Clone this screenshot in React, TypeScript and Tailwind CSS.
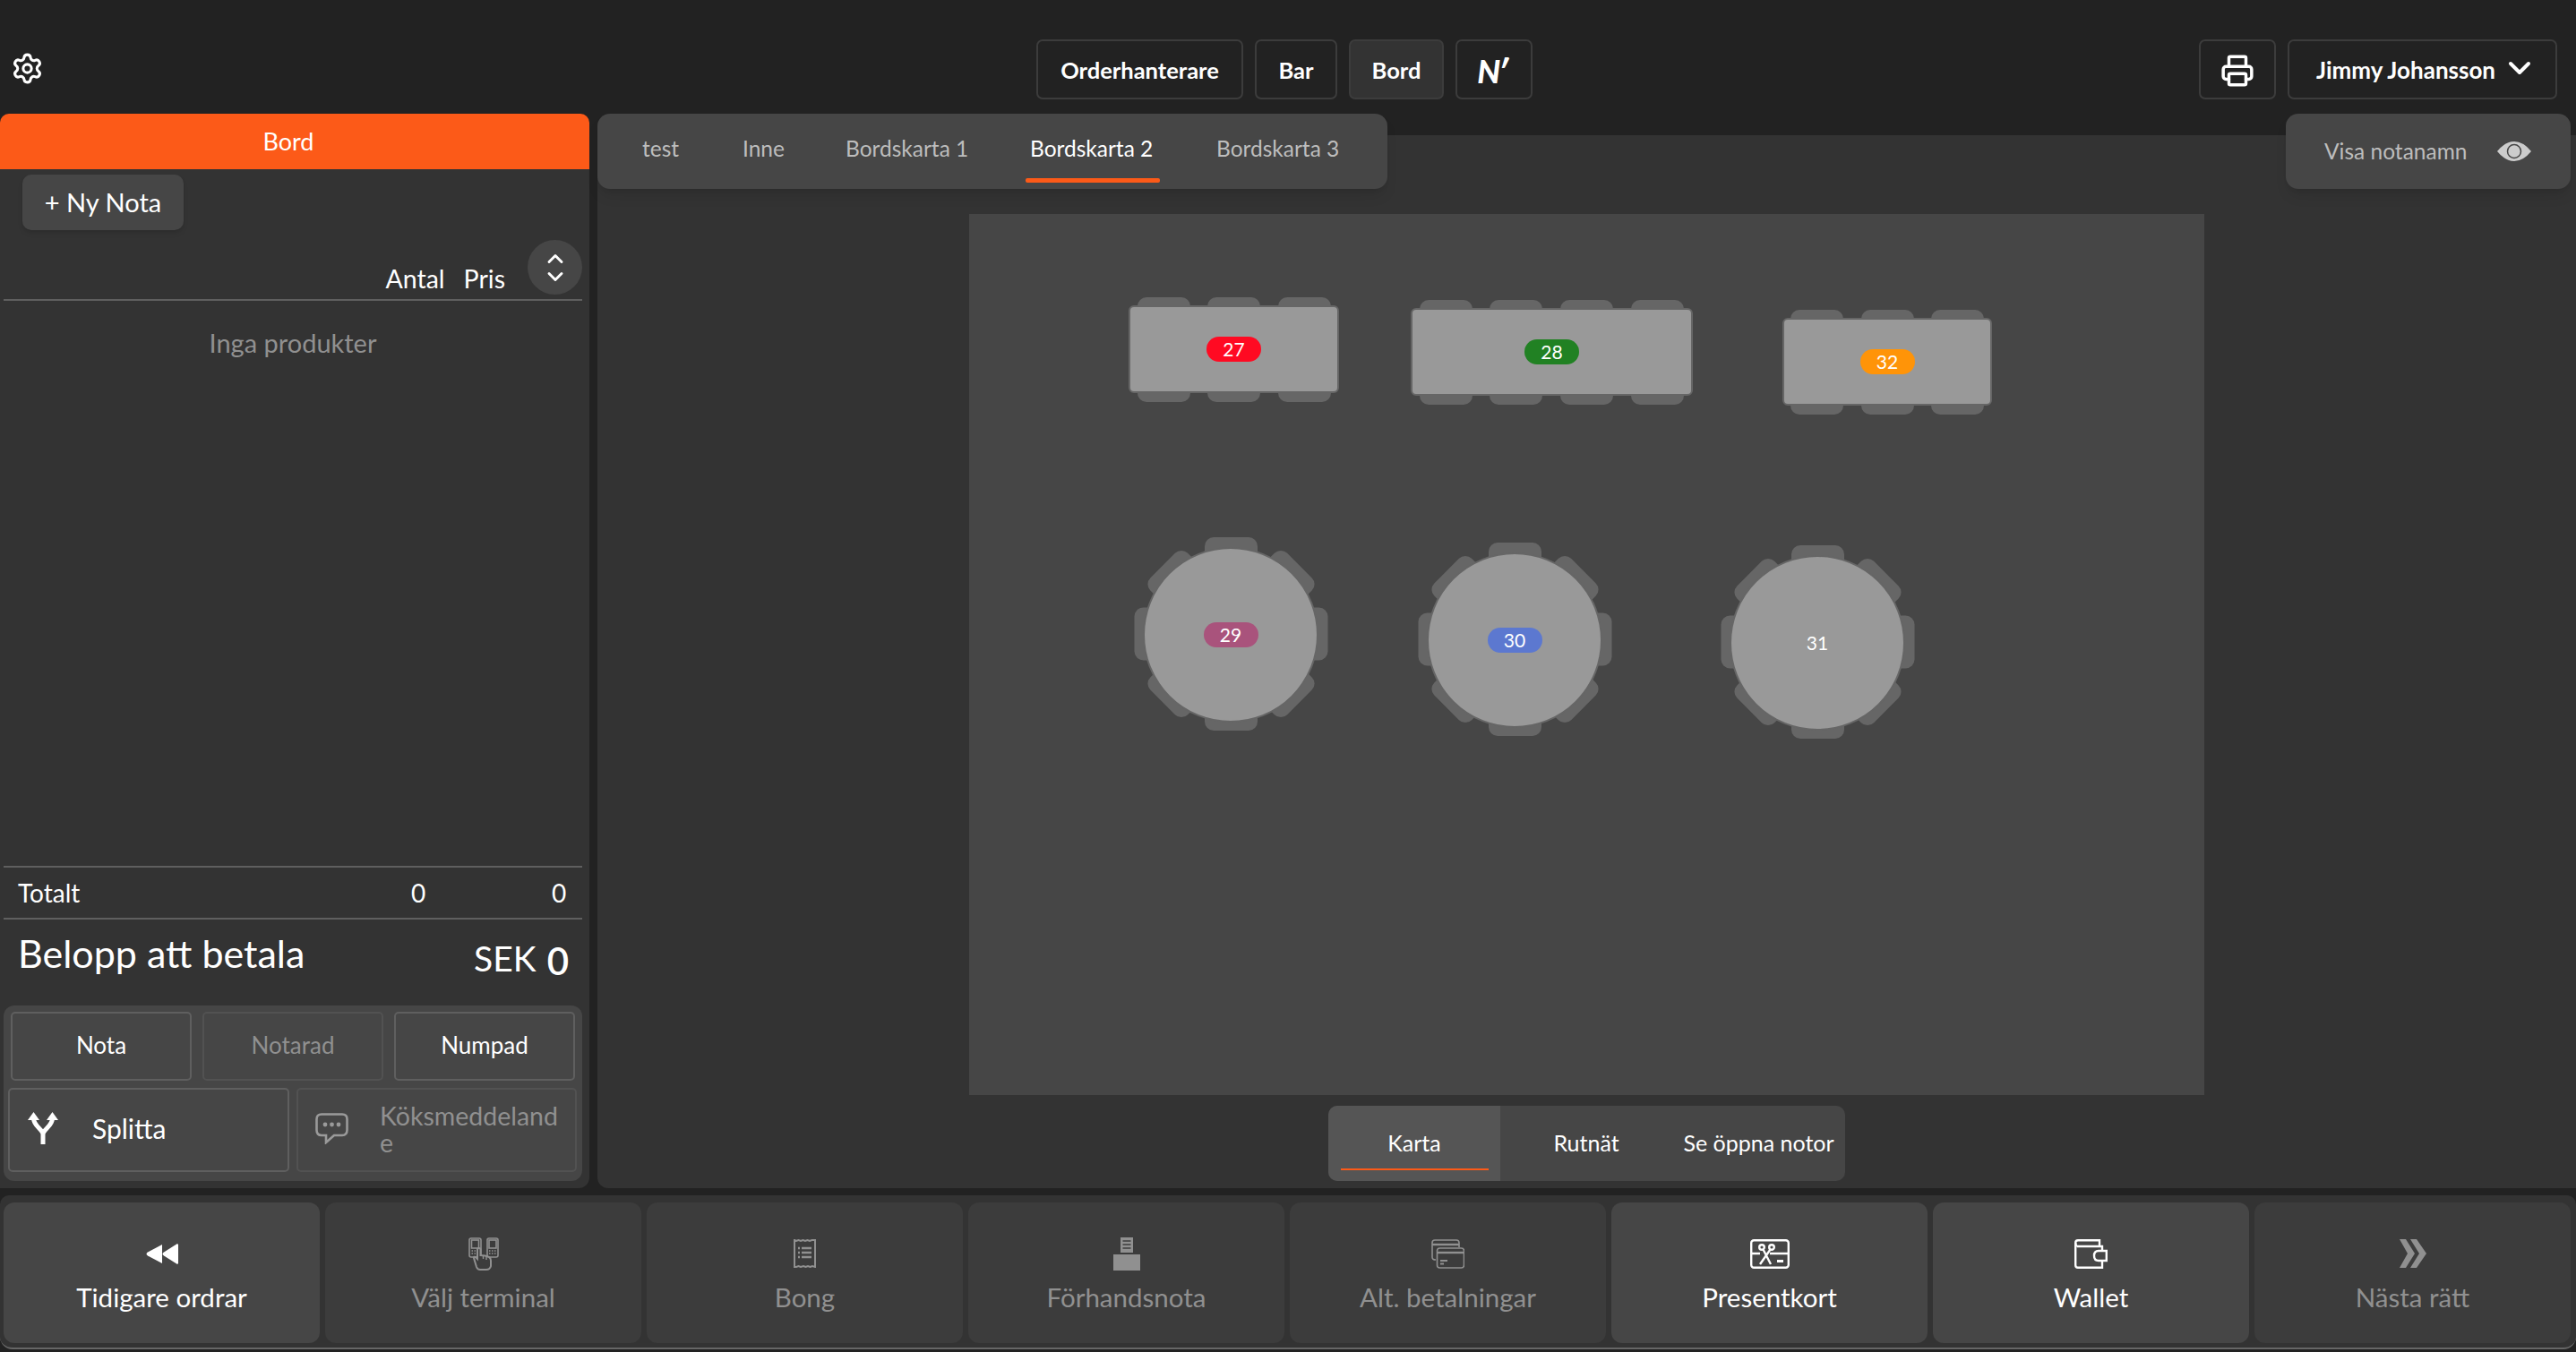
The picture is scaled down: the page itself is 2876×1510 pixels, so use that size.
import { ChevronDown, ChevronUp, Printer, Settings } from "lucide-react";

const font = { fontFamily: "Lato, 'Noto Sans', sans-serif" };

function Badge({ label, className }: { label: string; className: string }) {
    return (
        <div className={`w-[61px] h-[28px] rounded-[14px] flex items-center justify-center text-white text-[21px] ${className}`}>
            {label}
        </div>
    );
}

function RectTable({ x, y, w, label, badge, chairs }: { x: number; y: number; w: number; label: string; badge: string; chairs: number[] }) {
    return (
        <div className="absolute h-[118px]" style={{ left: x, top: y, width: w }}>
            {chairs.map((c) => (
                <div key={c} className="absolute top-0 h-[117px] w-[59px] bg-[#666666] rounded-[10px]" style={{ left: c }} />
            ))}
            <div className="absolute left-0 right-0 top-[9px] h-[98px] bg-[#999999] border-2 border-[#666666] rounded-[6px] flex items-center justify-center">
                <Badge label={label} className={badge} />
            </div>
        </div>
    );
}

function RoundTable({ x, y, label, badge }: { x: number; y: number; label: string; badge?: string }) {
    return (
        <div className="absolute w-[216px] h-[216px]" style={{ left: x, top: y }}>
            <div className="absolute left-[79px] top-0 w-[59px] h-[216px] bg-[#666666] rounded-[10px]" />
            <div className="absolute left-[79px] top-0 w-[59px] h-[216px] bg-[#666666] rounded-[10px] rotate-90" />
            <div className="absolute left-[79px] top-0 w-[59px] h-[216px] bg-[#666666] rounded-[10px] rotate-45" />
            <div className="absolute left-[79px] top-0 w-[59px] h-[216px] bg-[#666666] rounded-[10px] -rotate-45" />
            <div className="absolute left-[10px] top-[11px] w-[196px] h-[196px] bg-[#999999] border-2 border-[#666666] rounded-full flex items-center justify-center">
                {badge ? <Badge label={label} className={badge} /> : <span className="text-white text-[21px]">{label}</span>}
            </div>
        </div>
    );
}

function TopButton({ children, active, className }: { children: React.ReactNode; active?: boolean; className: string }) {
    return (
        <button className={`h-[67px] border-2 border-[#3c3c3c] rounded-[7px] flex items-center justify-center text-white font-bold pt-[2px] ${active ? "bg-[#333333]" : "bg-[#222222]"} ${className}`}>
            {children}
        </button>
    );
}

function Rewind() {
    return (
        <svg width="37" height="23" viewBox="0 0 37 23" fill="currentColor">
            <path d="M19 1 L19 22 L3 13.5 Q0 11.5 3 9.5 Z" />
            <path d="M36 0 L37 1 L37 22 L36 23 L21 13.5 Q18 11.5 21 9.5 Z" />
        </svg>
    );
}

function Terminals() {
    return (
        <svg width="34" height="37" viewBox="0 0 34 37" fill="none" stroke="currentColor" strokeWidth="1.6">
            <rect x="1" y="1" width="13" height="21" rx="2" />
            <rect x="3.5" y="3" width="8" height="9" />
            <path d="M3.5 15h8M3.5 18h8" strokeDasharray="1.5 1.5" />
            <rect x="21" y="1" width="12" height="21" rx="2" />
            <rect x="23" y="3" width="8" height="9" />
            <path d="M23 15h8M23 18h8" strokeDasharray="1.5 1.5" />
            <path fill="#3c3c3c" strokeWidth="2" d="M9 33 L6 23 Q6 21 8 22 L10 24 L10 13 Q12 11 13.5 13 L13.5 20 Q19 20 23 22 Q25 23 25 26 L25 32 Q24 36 20 36 L13 36 Q10 36 9 33 Z" />
            <path d="M16.5 20v4M20 21v4" strokeWidth="1.4" />
        </svg>
    );
}

function Receipt() {
    return (
        <svg width="25" height="32" viewBox="0 0 25 32" fill="none" stroke="currentColor" strokeWidth="2">
            <path d="M1 1 L3 2 L5.5 1 L8 2 L10.5 1 L13 2 L15.5 1 L18 2 L20.5 1 L24 1 L24 31 L21 30 L18.5 31 L16 30 L13.5 31 L11 30 L8 31 L5.5 30 L3 31 L1 31 Z" />
            <path d="M9 10h11M9 15h11M9 20h11" strokeWidth="2.4" />
            <path d="M5 10h2M5 15h2M5 20h2" strokeWidth="2.4" />
        </svg>
    );
}

function PreviewPrinter() {
    return (
        <svg width="30" height="37" viewBox="0 0 30 37" fill="currentColor">
            <path d="M8 0h14v17H8z M0 19h30v18H0z" />
            <path d="M10.500 4h9M10.500 8h9M10.500 12h9" stroke="#3c3c3c" strokeWidth="1.500" />
        </svg>
    );
}

function Cards() {
    return (
        <svg width="37" height="33" viewBox="0 0 37 33" fill="none" stroke="currentColor" strokeWidth="1.6">
            <path d="M5 23 Q1 23 1 20 L1 4 Q1 1 4 1 L28 1 Q31 1 31 4 L31 9" />
            <path d="M1 6h30" strokeWidth="2.4" />
            <rect x="6.5" y="10" width="30" height="22" rx="3" fill="#3c3c3c" />
            <path d="M6.5 15h30" strokeWidth="2.4" />
            <path d="M10 24h8M10 27.5h4" strokeWidth="2" />
        </svg>
    );
}

function GiftCard() {
    return (
        <svg width="44" height="33" viewBox="0 0 44 33" fill="none" stroke="currentColor" strokeWidth="2.4">
            <rect x="1.2" y="1.2" width="41.6" height="30.6" rx="3" />
            <path d="M1 16h10M22 16h21" />
            <circle cx="13" cy="9" r="2.8" />
            <circle cx="24" cy="9" r="2.8" />
            <path d="M14.5 11.5 L23 28 M22.5 11.5 L11 28" />
            <path d="M30 24.5h7" strokeWidth="3" />
        </svg>
    );
}

function Wallet() {
    return (
        <svg width="37" height="33" viewBox="0 0 37 33" fill="none" stroke="currentColor" strokeWidth="2.4">
            <path d="M31 13 L31 8 L3 8 M3 8 Q1.2 7 1.2 4 Q1.2 1.2 4 1.2 L28 1.2 L28 8" />
            <path d="M1.2 4 L1.2 29 Q1.2 31.8 4 31.8 L31 31.8 L31 24" />
            <path d="M35.8 13 L27 13 Q22 13 22 18.5 Q22 24 27 24 L35.8 24 Z" />
        </svg>
    );
}

function Next() {
    return (
        <svg width="30" height="32" viewBox="0 0 30 32" fill="currentColor">
            <path d="M0 0 L7 0 L17 16 L7 32 L0 32 L9 16 Z" />
            <path d="M12 0 L19 0 L30 16 L19 32 L12 32 L22 16 Z" />
        </svg>
    );
}

function BottomButton({ icon, label, on }: { icon: React.ReactNode; label: string; on?: boolean }) {
    return (
        <button className={`flex-1 h-[157px] rounded-[12px] flex flex-col items-center text-[29.5px] ${on ? "bg-[#464646] text-white" : "bg-[#3c3c3c] text-[#909090]"}`}>
            <div className="h-[38px] mt-[38px] flex items-center justify-center">{icon}</div>
            <span className="mt-[13px] leading-[34px]">{label}</span>
        </button>
    );
}

export default function App() {
    return (
        <div className="w-[2876px] h-[1510px] bg-[#222222] flex flex-col overflow-hidden" style={font}>
            {/* top bar */}
            <div className="h-[127px] relative flex items-start pt-[44px] shrink-0">
                <div className="w-[1157px] pl-[12px] pt-[14px] text-white">
                    <Settings size={37} strokeWidth={2} />
                </div>
                <div className="flex gap-[13px] text-[25.5px]">
                    <TopButton className="w-[231px]">Orderhanterare</TopButton>
                    <TopButton className="w-[92px]">Bar</TopButton>
                    <TopButton active className="w-[106px]">Bord</TopButton>
                    <TopButton className="w-[86px]">
                        <span className="italic font-black text-[36px] leading-none tracking-[-3px] pr-[6px]">N′</span>
                    </TopButton>
                </div>
                <div className="ml-auto mr-[21px] flex gap-[13px] text-[26px]">
                    <TopButton className="w-[86px]">
                        <Printer size={38} strokeWidth={2.2} />
                    </TopButton>
                    <TopButton className="w-[301px] pl-[10px]">
                        Jimmy Johansson
                        <ChevronDown size={40} strokeWidth={2.4} className="ml-[7px] -mt-[6px]" />
                    </TopButton>
                </div>
            </div>

            <div className="h-[1200px] flex shrink-0">
                {/* left panel */}
                <div className="w-[658px] bg-[#333333] rounded-t-[12px] rounded-br-[12px] flex flex-col text-white">
                    <div className="h-[62px] bg-[#fc5a18] rounded-t-[10px] flex items-center justify-center text-[27px] pr-[14px]">Bord</div>
                    <div className="px-[25px] pt-[6px]">
                        <button className="w-[180px] h-[62px] bg-[#464646] rounded-[10px] text-[29px] shadow-md">+ Ny Nota</button>
                    </div>
                    <div className="h-[79px] mx-[4px] w-[646px] border-b-2 border-[#5f5f5f] flex justify-end items-end relative">
                        <span className="text-[28.5px] leading-[34px] pb-[6px] mr-[21px]">Antal</span>
                        <span className="text-[28.5px] leading-[34px] pb-[6px] mr-[86px]">Pris</span>
                        <div className="absolute right-0 top-[11px] w-[61px] h-[61px] rounded-full bg-[#464646] flex flex-col items-center justify-center">
                            <ChevronUp size={28} strokeWidth={2.5} className="-mb-[8px]" />
                            <ChevronDown size={28} strokeWidth={2.5} />
                        </div>
                    </div>
                    <div className="flex-1 text-center text-[#909090] text-[29px] pt-[25px] pr-[4px]">Inga produkter</div>
                    <div className="mx-[4px] w-[646px] h-[60px] border-y-2 border-[#5f5f5f] flex items-center text-[28px]">
                        <span className="ml-[16px] w-[439px]">Totalt</span>
                        <span className="w-[157px]">0</span>
                        <span>0</span>
                    </div>
                    <div className="h-[96px] px-[20px] flex justify-between items-start pt-[13px]">
                        <span className="text-[43px] leading-[50px]">Belopp att betala</span>
                        <span className="flex items-baseline gap-[12px] pt-[4px] pr-[3px]">
                            <span className="text-[39px] leading-[50px]">SEK</span>
                            <span className="text-[42px] leading-[50px] font-semibold translate-y-[4px]">0</span>
                        </span>
                    </div>
                    <div className="mx-[4px] mb-[8px] w-[646px] h-[196px] bg-[#464646] rounded-[12px] flex flex-col">
                        <div className="mt-[7px] ml-[8px] flex gap-[12px]">
                            <button className="w-[202px] h-[77px] border-2 border-[#5f5f5f] rounded-[5px] text-[26px] pb-[2px]">Nota</button>
                            <button className="w-[202px] h-[77px] border-2 border-[#525252] rounded-[5px] text-[26px] pb-[2px] text-[#909090]">Notarad</button>
                            <button className="w-[202px] h-[77px] border-2 border-[#5f5f5f] rounded-[5px] text-[26px] pb-[2px]">Numpad</button>
                        </div>
                        <div className="mt-[8px] ml-[5px] flex gap-[8px]">
                            <button className="w-[314px] h-[94px] border-2 border-[#5f5f5f] rounded-[5px] flex items-center text-[30px] pb-[4px]">
                                <svg className="ml-[20px]" width="34" height="36" viewBox="0 0 34 36" fill="white" stroke="white" strokeWidth="0">
                                    <path d="M17 36 L17 25 C17 19 6.500 16 6.500 7 M17 25 C17 19 27.500 16 27.500 7" fill="none" strokeWidth="5" />
                                    <path d="M6.500 0 L13 9 L0 9 Z M27.500 0 L34 9 L21 9 Z" />
                                </svg>
                                <span className="ml-[38px]">Splitta</span>
                            </button>
                            <button className="w-[313px] h-[94px] border-2 border-[#525252] rounded-[5px] flex items-center text-[28.5px] text-[#909090] pb-[3px]">
                                <svg className="ml-[19px] text-[#9a9a9a]" width="37" height="35" viewBox="0 0 37 35" fill="none" stroke="currentColor" strokeWidth="2.6">
                                    <path d="M7 1.500 L30 1.500 Q35.500 1.500 35.500 7 L35.500 19 Q35.500 25 30 25 L21 25 L12 33 L12 25 L7 25 Q1.500 25 1.500 19 L1.500 7 Q1.500 1.500 7 1.500 Z" />
                                    <circle cx="11" cy="13" r="2.4" fill="currentColor" stroke="none" />
                                    <circle cx="18.500" cy="13" r="2.400" fill="currentColor" stroke="none" />
                                    <circle cx="26" cy="13" r="2.4" fill="currentColor" stroke="none" />
                                </svg>
                                <span className="ml-[35px] w-[206px] text-left break-all leading-[30px]">Köksmeddelande</span>
                            </button>
                        </div>
                    </div>
                </div>

                {/* main panel */}
                <div className="flex-1 ml-[9px] pt-[24px]">
                    <div className="h-full bg-[#333333] rounded-bl-[12px] flex flex-col">
                        <div className="-mt-[24px] h-[84px] flex justify-between items-start pr-[6px] shrink-0">
                            <div className="w-[882px] h-[84px] bg-[#464646] rounded-[14px] shadow-lg flex text-[24.5px] text-[#bdbdbd] relative">
                                <span className="absolute left-[50px] top-[21px]">test</span>
                                <span className="absolute left-[162px] top-[21px]">Inne</span>
                                <span className="absolute left-[277px] top-[21px]">Bordskarta 1</span>
                                <span className="absolute left-[483px] top-[21px] text-white">Bordskarta 2</span>
                                <span className="absolute left-[691px] top-[21px]">Bordskarta 3</span>
                                <div className="absolute left-[478px] top-[72px] w-[150px] h-[5px] rounded-[2px] bg-[#fc5a18]" />
                            </div>
                            <div className="w-[318px] h-[84px] bg-[#464646] rounded-[14px] shadow-lg flex items-center text-[24.5px] text-[#bdbdbd]">
                                <span className="ml-[43px]">Visa notanamn</span>
                                <svg className="ml-[33px]" width="38" height="22" viewBox="0 0 38 22">
                                    <path d="M0 11 Q9 0 19 0 Q29 0 38 11 Q29 22 19 22 Q9 22 0 11 Z" fill="#cccccc" />
                                    <circle cx="19" cy="11" r="7.500" fill="#cccccc" stroke="#464646" strokeWidth="1.500" />
                                </svg>
                            </div>
                        </div>

                        {/* floor plan */}
                        <div className="relative w-[1379px] h-[984px] mx-auto mt-[28px] bg-[#464646] shrink-0">
                            <RectTable x={178} y={93} w={235} label="27" badge="bg-[#ff0a22]" chairs={[10, 88, 167]} />
                            <RectTable x={493} y={96} w={315} label="28" badge="bg-[#218123]" chairs={[10, 88, 167, 246]} />
                            <RectTable x={908} y={107} w={234} label="32" badge="bg-[#ff9408]" chairs={[9, 88, 166]} />
                            <RoundTable x={184} y={361} label="29" badge="bg-[#a9537c]" />
                            <RoundTable x={501} y={367} label="30" badge="bg-[#5c78d0]" />
                            <RoundTable x={839} y={370} label="31" />
                        </div>

                        <div className="w-[577px] h-[84px] mx-auto mt-[12px] bg-[#464646] rounded-[10px] flex text-white text-[25px] overflow-hidden">
                            <div className="w-[192px] bg-[#555555] relative flex items-center justify-center">
                                Karta
                                <div className="absolute left-[14px] top-[70px] w-[165px] h-[2px] bg-[#fc5a18]" />
                            </div>
                            <div className="w-[192px] flex items-center justify-center">Rutnät</div>
                            <div className="w-[193px] flex items-center justify-center">Se öppna notor</div>
                        </div>
                    </div>
                </div>
            </div>

            {/* bottom bar */}
            <div className="mt-[8px] h-[172px] bg-[#333333] border-b-2 border-[#666666] rounded-b-[14px] rounded-t-[10px] pl-[4px] pr-[6px] pt-[8px] flex gap-[6px] shrink-0">
                <BottomButton on icon={<Rewind />} label="Tidigare ordrar" />
                <BottomButton icon={<Terminals />} label="Välj terminal" />
                <BottomButton icon={<Receipt />} label="Bong" />
                <BottomButton icon={<PreviewPrinter />} label="Förhandsnota" />
                <BottomButton icon={<Cards />} label="Alt. betalningar" />
                <BottomButton on icon={<GiftCard />} label="Presentkort" />
                <BottomButton on icon={<Wallet />} label="Wallet" />
                <BottomButton icon={<Next />} label="Nästa rätt" />
            </div>
        </div>
    );
}
